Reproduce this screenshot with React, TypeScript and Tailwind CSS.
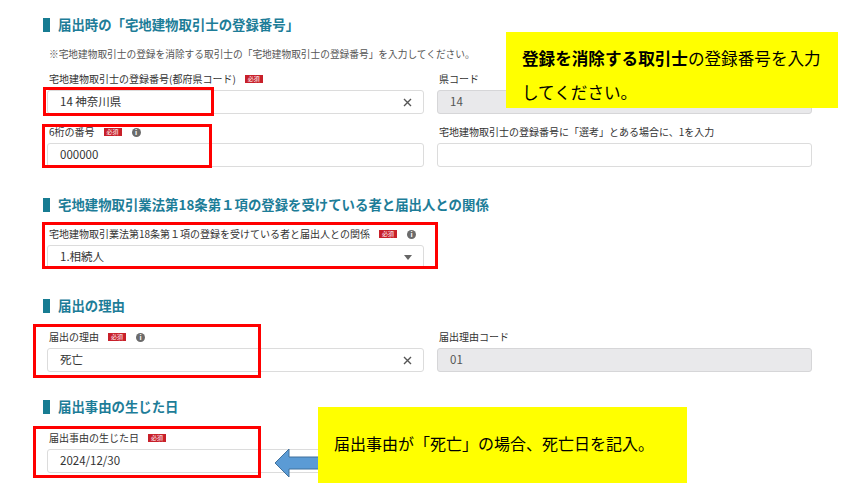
import React from 'react';

const font = { fontFamily: '"Noto Sans CJK JP", "Noto Sans", sans-serif' };

const SectionTitle: React.FC<{ children: React.ReactNode; className?: string }> = ({ children, className }) => (
    <div className={`flex items-center h-[16px] ${className ?? ''}`}>
        <div className="shrink-0 w-[7px] min-w-[7px] h-[14px] bg-[#177c92] mr-[8px]" />
        <h2 className="text-[13.4px] font-bold leading-none text-[#1d7d98] whitespace-nowrap">{children}</h2>
    </div>
);

const Required = () => (
    <span className="inline-flex items-center justify-center w-[18px] h-[8px] bg-[#c8202a] text-white text-[6px] leading-none ml-[9px]">必須</span>
);

const Info = () => (
    <span className="inline-flex items-center justify-center w-[9px] h-[9px] rounded-full bg-[#6b6b6b] text-white text-[7px] font-bold leading-none ml-[10px]">i</span>
);

const ClearIcon = () => (
    <svg width="9" height="9" viewBox="0 0 9 9" className="text-[#555]">
        <path d="M1 1 L8 8 M8 1 L1 8" stroke="currentColor" strokeWidth="1.4" />
    </svg>
);

const Caret = () => (
    <svg width="8" height="5" viewBox="0 0 8 5">
        <path d="M0 0 H8 L4 5 Z" fill="#666" />
    </svg>
);

interface FieldProps {
    label: string;
    value?: string;
    required?: boolean;
    info?: boolean;
    readOnly?: boolean;
    clear?: boolean;
    select?: boolean;
}

const Field: React.FC<FieldProps> = ({ label, value, required, info, readOnly, clear, select }) => (
    <div>
        <div className="flex items-center h-[14px] pl-[2px] text-[10px] leading-none text-[#333] whitespace-nowrap">
            {label}
            {required && <Required />}
            {info && <Info />}
        </div>
        <div
            className={`mt-[4px] h-[24px] flex items-center justify-between px-[12px] rounded-[3px] border text-[11.5px] ${
                readOnly ? 'bg-[#e9e9eb] border-[#d6d6d8] text-[#555]' : 'bg-white border-[#dcdcdc] text-[#333]'
            }`}
        >
            <span>{value}</span>
            {clear && <span className="-mr-[1px]"><ClearIcon /></span>}
            {select && <span className="-mr-[1px]"><Caret /></span>}
        </div>
    </div>
);

const RedBox: React.FC<{ className: string }> = ({ className }) => (
    <div className={`absolute border-[3px] border-[#ff0000] ${className}`} />
);

export default function App() {
    return (
        <div style={font} className="relative w-[858px] h-[490px] bg-white overflow-hidden">
            <div className="pl-[43px] pt-[17px]">
                <SectionTitle>届出時の「宅地建物取引士の登録番号」</SectionTitle>
                <p className="mt-[14px] ml-[6px] h-[14px] text-[9.7px] leading-[14px] text-[#555] whitespace-nowrap">
                    ※宅地建物取引士の登録を消除する取引士の「宅地建物取引士の登録番号」を入力してください。
                </p>
                <div className="ml-[4px] mt-[11px] grid grid-cols-[377px_375px] gap-x-[13px] gap-y-[11px]">
                    <Field label="宅地建物取引士の登録番号(都府県コード)" value="14 神奈川県" required clear />
                    <Field label="県コード" value="14" readOnly />
                    <Field label="6桁の番号" value="000000" required info />
                    <Field label="宅地建物取引士の登録番号に「選考」とある場合に、1を入力" />
                </div>

                <SectionTitle className="mt-[30px]">宅地建物取引業法第18条第１項の登録を受けている者と届出人との関係</SectionTitle>
                <div className="ml-[4px] mt-[14px] w-[377px]">
                    <Field label="宅地建物取引業法第18条第１項の登録を受けている者と届出人との関係" value="1.相続人" required info select />
                </div>

                <SectionTitle className="mt-[29px]">届出の理由</SectionTitle>
                <div className="ml-[4px] mt-[16px] grid grid-cols-[377px_375px] gap-x-[13px]">
                    <Field label="届出の理由" value="死亡" required info clear />
                    <Field label="届出理由コード" value="01" readOnly />
                </div>

                <SectionTitle className="mt-[27px]">届出事由の生じた日</SectionTitle>
                <div className="ml-[4px] mt-[16px] w-[377px]">
                    <Field label="届出事由の生じた日" value="2024/12/30" required />
                </div>
            </div>

            {/* annotations */}
            <RedBox className="left-[43px] top-[87px] w-[171px] h-[29px]" />
            <RedBox className="left-[42px] top-[124px] w-[170px] h-[44px]" />
            <RedBox className="left-[42px] top-[222px] w-[396px] h-[47px]" />
            <RedBox className="left-[33px] top-[324px] w-[228px] h-[54px]" />
            <RedBox className="left-[33px] top-[426px] w-[228px] h-[52px]" />

            <div className="absolute left-[506px] top-[32px] w-[332px] h-[76px] bg-[#ffff00] pl-[16px] pt-[9px] text-[16.6px] leading-[34px] text-black whitespace-nowrap">
                <div><span className="font-bold">登録を消除する取引士</span>の登録番号を入力</div>
                <div>してください。</div>
            </div>

            <svg className="absolute left-[273px] top-[447px]" width="48" height="32" viewBox="0 0 48 32">
                <path d="M2 16 L16 2 L16 10 L46 10 L46 22 L16 22 L16 30 Z" fill="#5b9bd5" stroke="#41719c" strokeWidth="1" />
            </svg>
            <div className="absolute left-[318px] top-[407px] w-[369px] h-[76px] bg-[#ffff00] flex items-center pl-[16px] pb-[4px] text-[16px] text-black whitespace-nowrap">
                届出事由が「死亡」の場合、死亡日を記入。
            </div>
        </div>
    );
}
